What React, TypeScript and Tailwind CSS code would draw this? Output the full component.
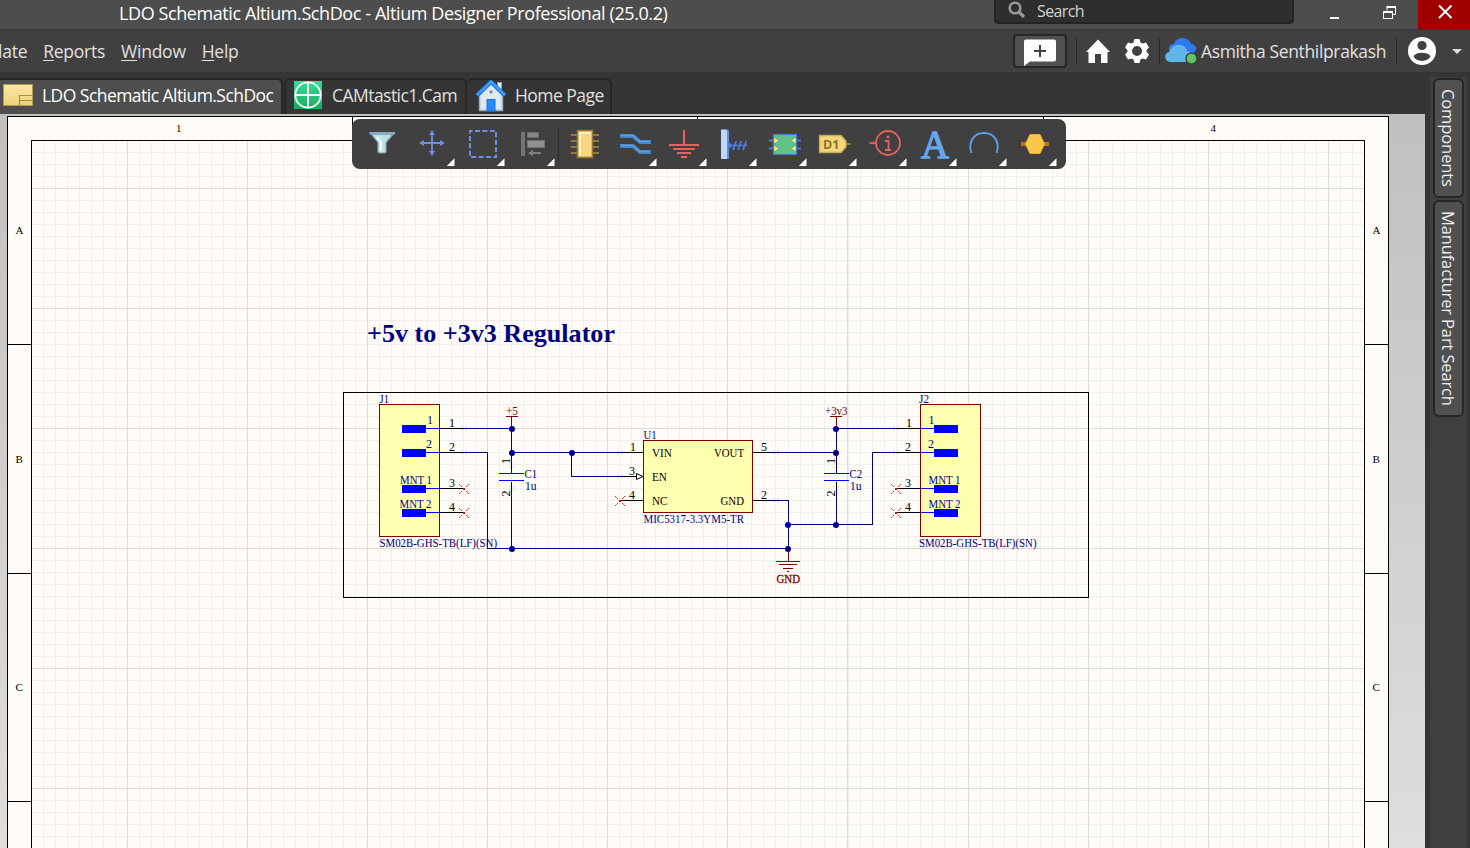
import React from "react";

const NAVY = "#000080";
const BLUE = "#0000ff";
const MAROON = "#800000";

const range = (start: number, step: number, end: number) => {
  const out: number[] = [];
  for (let i = 0; start + i * step < end; i++) out.push(Math.floor(start + i * step));
  return out;
};

type Seg = [number, number, number, number];

/** One-pixel horizontal or vertical segments between pixel coordinates. */
function Lines({ c, segs }: { c: string; segs: Seg[] }) {
  return (
    <g fill={c}>
      {segs.map(([x1, y1, x2, y2], i) => (
        <rect key={i} x={x1} y={y1} width={Math.max(1, x2 - x1)} height={Math.max(1, y2 - y1)} />
      ))}
    </g>
  );
}

function T({ x, y, s, w, c = "#000", size = 12, weight = 400 }: { x: number; y: number; s: string; w?: number; c?: string; size?: number; weight?: number }) {
  return (
    <text x={x} y={y} fill={c} fontSize={size} fontWeight={weight} textLength={w} lengthAdjust="spacingAndGlyphs">
      {s}
    </text>
  );
}

function NoConnect({ x, y }: { x: number; y: number }) {
  return (
    <g fill="#ff0000">
      <rect x={x - 1} y={y} width="2" height="2" />
      {[-5, -4, -3, 2, 3, 4].map((d) => (
        <g key={d} opacity={d === -4 || d === 3 ? 0.55 : 0.85}>
          <rect x={x + d} y={y + 1 + d} width="1" height="1" />
          <rect x={x + d} y={y - d} width="1" height="1" />
        </g>
      ))}
    </g>
  );
}

/** Faint marker around the electrical end of a pin. */
function Hotspot({ x, y }: { x: number; y: number }) {
  return (
    <g fill="#e3ebf6">
      <rect x={x - 3} y={y - 2} width="2" height="2" />
      <rect x={x + 1} y={y - 2} width="2" height="2" />
      <rect x={x - 3} y={y + 1} width="2" height="2" />
      <rect x={x + 1} y={y + 1} width="2" height="2" />
    </g>
  );
}

function Connector({ x, mirrored }: { x: number; mirrored?: boolean }) {
  const rows = [428, 452, 488, 512];
  return (
    <g>
      <rect x={x + 0.5} y="404.5" width="60" height="132" fill="#ffffb0" stroke={MAROON} />
      {rows.map((y) => (
        <g key={y}>
          <rect x={mirrored ? x + 14 : x + 23} y={y - 3} width="24" height="8" fill={BLUE} />
          <rect x={mirrored ? x + 1 : x + 47} y={y} width="13" height="1" fill={BLUE} />
          <rect x={mirrored ? x - 24 : x + 61} y={y} width="24" height="1" fill="#000" />
        </g>
      ))}
    </g>
  );
}

function Capacitor({ x, name }: { x: number; name: string }) {
  return (
    <g>
      <Lines c="#000" segs={[[x, 463, x + 1, 470], [x, 482, x + 1, 490]]} />
      <Lines c={BLUE} segs={[[x, 470, x + 1, 473], [x - 12, 473, x + 13, 474], [x - 12, 480, x + 13, 481]]} />
      <T x={x + 13.5} y={478} s={name} w={12.5} c={NAVY} size={12} />
      <T x={x + 14} y={490} s="1u" w={11.5} c={NAVY} size={12} />
      <text transform={`translate(${x - 1.5} 464) rotate(-90)`} fontSize="12">1</text>
      <text transform={`translate(${x - 1.5} 496.5) rotate(-90)`} fontSize="12">2</text>
    </g>
  );
}

function Schematic() {
  const minorX = range(43.2, 12.013, 1364);
  const minorY = range(152.2, 12.013, 848);
  const majorX = range(127.2, 120.13, 1364);
  const majorY = range(188.2, 120.13, 848);
  return (
    <svg className="block h-full w-full" viewBox="0 114 1425 734" preserveAspectRatio="xMinYMin slice" fontFamily="'Liberation Serif', 'Times New Roman', serif">
      <rect x="7.5" y="116.5" width="1381" height="760" fill="#fffcf7" stroke="#000" />
      <g fill="#eeeeea">
        {minorX.map((x) => <rect key={x} x={x} y="142" width="1" height="706" />)}
        {minorY.map((y) => <rect key={y} x="32" y={y} width="1332" height="1" />)}
      </g>
      <g fill="#dbdbd6">
        {majorX.map((x) => <rect key={x} x={x} y="142" width="1" height="706" />)}
        {majorY.map((y) => <rect key={y} x="32" y={y} width="1332" height="1" />)}
      </g>
      <rect x="31.5" y="140.5" width="1333" height="760" fill="none" stroke="#000" />
      <Lines
        c="#000"
        segs={[
          [352, 116, 353, 140], [697, 116, 698, 140], [1043, 116, 1044, 140],
          [8, 344, 31, 345], [8, 573, 31, 574], [8, 801, 31, 802],
          [1365, 344, 1388, 345], [1365, 573, 1388, 574], [1365, 801, 1388, 802],
        ]}
      />
      <T x={176} y={132} s="1" size={11} />
      <T x={1210.5} y={132} s="4" size={11} />
      {[15.5, 1372.5].map((x) => (
        <g key={x}>
          <T x={x} y={234} s="A" size={11} />
          <T x={x} y={463} s="B" size={11} />
          <T x={x} y={691} s="C" size={11} />
        </g>
      ))}

      <T x={367} y={342} s="+5v to +3v3 Regulator" w={248} c={NAVY} size={25.5} weight={700} />
      <rect x="343.5" y="392.5" width="745" height="205" fill="none" stroke="#000" />

      {[[464, 428], [464, 452], [620, 452], [620, 476], [776, 452], [776, 500], [896, 428], [896, 452], [512, 465], [512, 488], [836, 465], [836, 488]].map(([x, y]) => (
        <Hotspot key={`${x}-${y}`} x={x} y={y} />
      ))}

      <Connector x={379} />
      <Connector x={920} mirrored />
      <rect x="643.5" y="440.5" width="109" height="72" fill="#ffffb0" stroke={MAROON} />

      <Lines
        c={NAVY}
        segs={[
          [464, 428, 512, 429], [464, 452, 488, 453], [487, 452, 488, 549], [487, 548, 789, 549],
          [511, 428, 512, 463], [511, 490, 512, 549], [511, 452, 620, 453],
          [571, 452, 572, 477], [571, 476, 620, 477],
          [776, 452, 836, 453], [776, 500, 789, 501], [788, 500, 789, 549],
          [788, 524, 873, 525], [872, 452, 873, 525], [872, 452, 896, 453],
          [836, 428, 896, 429], [836, 428, 837, 463], [836, 490, 837, 525],
        ]}
      />
      <Lines
        c="#000"
        segs={[[620, 452, 643, 453], [620, 476, 637, 477], [620, 500, 643, 501], [753, 452, 776, 453], [753, 500, 776, 501]]}
      />
      <path d="M636.5 473.5 L643 476.5 L636.5 479.5 Z" fill="#fff" stroke="#000" />
      <Lines
        c={MAROON}
        segs={[
          [511, 416, 512, 428], [506, 416, 518, 417], [836, 416, 837, 428], [830, 416, 842, 417],
          [788, 550, 789, 561], [776, 561, 800, 562], [779, 564, 797, 565], [783, 568, 793, 569], [787, 571, 789, 572],
        ]}
      />
      <g fill={NAVY}>
        {[[512, 429], [512, 453], [512, 549], [572, 453], [788, 525], [788, 549], [836, 525], [836, 453], [836, 429]].map(([x, y]) => (
          <circle key={`${x}-${y}`} cx={x} cy={y} r="3" />
        ))}
      </g>
      <NoConnect x={464} y={488} />
      <NoConnect x={464} y={512} />
      <NoConnect x={620} y={500} />
      <NoConnect x={896} y={488} />
      <NoConnect x={896} y={512} />
      <Capacitor x={511} name="C1" />
      <Capacitor x={836} name="C2" />

      <T x={379.5} y={403} s="J1" w={9.5} c={NAVY} />
      <T x={427} y={424} s="1" c={NAVY} />
      <T x={426} y={448} s="2" c={NAVY} />
      <T x={400} y={484} s="MNT 1" w={32} c={NAVY} />
      <T x={399.5} y={508} s="MNT 2" w={32} c={NAVY} />
      <T x={449} y={427} s="1" />
      <T x={449} y={451} s="2" />
      <T x={449} y={487} s="3" />
      <T x={449} y={511} s="4" />
      <T x={379.5} y={547} s="SM02B-GHS-TB(LF)(SN)" w={117.5} c={NAVY} size={11.5} />

      <T x={919} y={403} s="J2" w={10} c={NAVY} />
      <T x={928.5} y={424} s="1" c={NAVY} />
      <T x={928} y={448} s="2" c={NAVY} />
      <T x={928.5} y={484} s="MNT 1" w={32} c={NAVY} />
      <T x={928.5} y={508} s="MNT 2" w={32} c={NAVY} />
      <T x={906} y={427} s="1" />
      <T x={905} y={451} s="2" />
      <T x={905} y={487} s="3" />
      <T x={905} y={511} s="4" />
      <T x={919} y={547} s="SM02B-GHS-TB(LF)(SN)" w={117.5} c={NAVY} size={11.5} />

      <T x={643.5} y={439} s="U1" w={13} c={NAVY} />
      <T x={643.5} y={523} s="MIC5317-3.3YM5-TR" w={100.5} c={NAVY} size={11.5} />
      <T x={652} y={457} s="VIN" w={20} size={11.5} />
      <T x={652} y={481} s="EN" w={15} size={11.5} />
      <T x={652} y={505} s="NC" w={15.5} size={11.5} />
      <T x={714} y={457} s="VOUT" w={30} size={11.5} />
      <T x={720.5} y={505} s="GND" w={23.5} size={11.5} />
      <T x={630} y={451} s="1" />
      <T x={629} y={475} s="3" />
      <T x={629} y={499} s="4" />
      <T x={761} y={451} s="5" />
      <T x={761} y={499} s="2" />

      <T x={506} y={415} s="+5" w={12} c={MAROON} />
      <T x={825} y={415} s="+3v3" w={22.5} c={MAROON} />
      <g stroke={MAROON} strokeWidth=".3">
        <T x={776.5} y={583} s="GND" w={23.5} c={MAROON} size={11.5} />
      </g>
    </svg>
  );
}

function Tool({ x, menu = true, children }: { x: number; menu?: boolean; children: React.ReactNode }) {
  return (
    <button className="h-[49px] w-[50px] shrink-0">
      <svg className="block h-[49px] w-[50px]" viewBox={`${x} 119 50 49`}>
        {children}
        {menu && <path d={`M${x + 46.5} 158.3 V166 H${x + 38.8} Z`} fill="#fff" />}
      </svg>
    </button>
  );
}

function Toolbar() {
  return (
    <div className="absolute left-[352px] top-[5px] flex h-[50px] w-[714px] items-start rounded-lg bg-[#404040] pl-[6px]">
      <Tool x={358} menu={false}>
        <path d="M370 132.5 H394.5 L386 142.5 V152 L384.500 153 H379.5 L378 152 V142.500 Z" fill="#bfe0e6" stroke="#7fa5ba" strokeWidth="1.2" />
        <path d="M369.500 132 H395 V134 L393 135 H371.500 L369.500 134 Z" fill="#86adc2" />
        <path d="M375 137 H378 L382 141.500 V151 H379.500 V142 Z" fill="#f2fafb" />
      </Tool>
      <Tool x={408}>
        <g stroke="#6f8fe0" strokeWidth="1.8" fill="none">
          <path d="M432 133 V154 M421.500 143 H443" />
        </g>
        <path d="M432 130 l3 5h-6z M432 156 l3-5h-6z M419 143 l5-3v6z M445 143 l-5-3v6z" fill="#6f8fe0" />
      </Tool>
      <Tool x={458}>
        <rect x="470" y="131" width="26" height="26" fill="none" stroke="#6f8fe0" strokeWidth="2" strokeDasharray="5 2.43" strokeDashoffset="2.5" />
      </Tool>
      <Tool x={508}>
        <rect x="521" y="132" width="4" height="24" fill="#747474" />
        <rect x="527.500" y="132.500" width="11" height="5" fill="#858585" stroke="#6a6a6a" />
        <rect x="527.500" y="140.500" width="17" height="7" fill="#909090" stroke="#707070" />
        <path d="M541 153 H531" stroke="#808080" strokeWidth="2" />
        <path d="M528 153 l5-3v6z" fill="#808080" />
      </Tool>
      <div className="mr-px mt-[9px] h-8 w-px shrink-0 bg-[#262626]" />
      <Tool x={560} menu={false}>
        <path d="M571 135 H599 M571 141 H599 M571 147 H599 M571 153 H599" stroke="#94783a" strokeWidth="2" />
        <rect x="577.500" y="130.500" width="15" height="27" fill="#f8d67f" stroke="#94783a" strokeWidth="1.600" />
        <path d="M579 132 H591 V134 H581 V156 H579 Z" fill="#fff0c4" />
      </Tool>
      <Tool x={610}>
        <g fill="none" stroke="#4583c4" strokeWidth="3.800">
          <path d="M620 136 H633 L640 142 H651" />
          <path d="M620 146 H633 L640 152 H651" />
        </g>
        <path d="M621 135.500 H633 L640 141.500 H649 M621 145.500 H633 L640 151.500 H649" fill="none" stroke="#5c9fe2" strokeWidth="1.500" />
      </Tool>
      <Tool x={660}>
        <path d="M684 130 V144 M669 145 H699 M673 149 H695 M677 153 H691 M681 157 H687" stroke="#e8615a" strokeWidth="2" />
      </Tool>
      <Tool x={710}>
        <path d="M721 129.500 H727 L729 131 V159 H721 Z" fill="#bdd6fb" />
        <path d="M728 130 V159 M728 142 l3.500 3.500 l-3.500 3.500z M728 145.500 H737" stroke="#5078d6" strokeWidth="1.600" fill="#8bb2f5" />
        <path d="M733 150 l3.300-9 M738 150 l3.300-9 M743 150 l3.300-9" stroke="#5078d6" strokeWidth="1.900" />
        <path d="M733 145.500 H747.500" stroke="#5078d6" strokeWidth="1.500" />
      </Tool>
      <Tool x={760}>
        <path d="M769 140.500 H801 M769 148.500 H801" stroke="#4a78d8" strokeWidth="2" />
        <rect x="773.500" y="134.500" width="23" height="20" fill="#5fc486" stroke="#477ccb" strokeWidth="1.200" />
        <path d="M774 137 l5 3.500 l-5 3.500z M774 145 l5 3.500 l-5 3.500z M796 137 l-5 3.500 l5 3.500z M796 145 l-5 3.500 l5 3.500z" fill="#fff85c" stroke="#477ccb" strokeWidth=".600" />
      </Tool>
      <Tool x={810}>
        <path d="M843 144 H851" stroke="#94783a" strokeWidth="2" />
        <path d="M819.500 135.500 H841 L846 141 V147 L841 152.500 H819.500 Z" fill="#f2d77b" stroke="#caa956" strokeWidth="1.300" />
        <text x="823" y="148.500" fontFamily="'Open Sans', sans-serif" fontSize="12.500" fontWeight="700" fill="#94702a" textLength="16.500">D1</text>
      </Tool>
      <Tool x={860}>
        <circle cx="888" cy="143" r="12" fill="none" stroke="#e8615f" strokeWidth="1.800" />
        <path d="M869.500 143 H876" stroke="#e8615f" strokeWidth="2.200" />
        <path d="M885 141 H888.500 V149.500 M885 150 H891" stroke="#e8615f" strokeWidth="1.800" fill="none" />
        <circle cx="888" cy="137" r="1.500" fill="#e8615f" />
      </Tool>
      <Tool x={910}>
        <text x="921" y="157.500" fontFamily="'Liberation Serif', serif" fontSize="40" fill="#65a6ed" stroke="#65a6ed" strokeWidth="1.300" textLength="28" lengthAdjust="spacingAndGlyphs">A</text>
      </Tool>
      <Tool x={960}>
        <path d="M971.500 153 C967.500 142 974 133 984 133 C994 133 1000.500 142 996.500 153" fill="none" stroke="#5c9de8" strokeWidth="1.900" />
      </Tool>
      <Tool x={1010}>
        <rect x="1021" y="142" width="28" height="4" fill="#b87524" />
        <path d="M1030 134.500 H1040 L1044.500 144 L1040 153.500 H1030 L1025.500 144 Z" fill="#fbc748" stroke="#eeb233" strokeWidth="1" />
      </Tool>
    </div>
  );
}

function SchIcon() {
  return (
    <svg className="h-[22px] w-[30px] shrink-0" viewBox="0 0 30 22">
      <defs>
        <linearGradient id="sch" x1="0" y1="0" x2="0" y2="1">
          <stop offset="0" stopColor="#fae8a8" />
          <stop offset="1" stopColor="#ecd377" />
        </linearGradient>
      </defs>
      <rect x=".5" y=".5" width="29" height="21" fill="url(#sch)" stroke="#b39a55" />
      <path d="M29 11.500 H16.500 V21 M16.500 16.500 H29" fill="none" stroke="#a88f4a" strokeWidth="1.200" />
    </svg>
  );
}

function CamIcon() {
  return (
    <svg className="h-7 w-7 shrink-0" viewBox="0 0 28 28">
      <defs>
        <linearGradient id="cam" x1="0" y1="0" x2="0" y2="1">
          <stop offset="0" stopColor="#3fd995" />
          <stop offset="1" stopColor="#14b060" />
        </linearGradient>
      </defs>
      <rect width="28" height="28" fill="url(#cam)" />
      <circle cx="14" cy="14" r="12.700" fill="none" stroke="#fff" strokeWidth="1.800" />
      <path d="M14 1 V27 M1 14 H27" stroke="#fff" strokeWidth="2" />
    </svg>
  );
}

function HomePageIcon() {
  return (
    <svg className="mt-0.5 h-8 w-8 shrink-0" viewBox="0 0 32 32">
      <rect x="22.500" y="2.500" width="4" height="9" fill="#e4ecf5" stroke="#8ba9b9" />
      <path d="M4.500 14 L16 3 L27.500 14 V30.500 H4.500 Z" fill="#dfe8f3" stroke="#8fb0bf" strokeWidth="1.500" />
      <rect x="12" y="19.500" width="8" height="11.500" fill="#2a8cf3" stroke="#1c6dde" />
      <circle cx="16" cy="12" r="1.800" fill="#7895a5" />
      <path d="M2 15.500 L16 2 L30 15.500" fill="none" stroke="#1c6dde" strokeWidth="4.200" />
      <path d="M2 15 L16 1.700 L30 15" fill="none" stroke="#399df9" strokeWidth="2.600" />
    </svg>
  );
}

export default function App() {
  return (
    <div className="flex h-[848px] w-[1470px] flex-col overflow-hidden bg-[#353535] font-['Open_Sans',sans-serif] text-[18px] text-[#e0e0e0]">
      <header className="flex h-[30px] shrink-0 border-b border-[#353535] bg-[#4d4d4d]">
        <h1 className="w-[994px] shrink-0 whitespace-pre pl-[119px] leading-[27px] tracking-[-0.41px] text-white">LDO Schematic Altium.SchDoc - Altium Designer Professional (25.0.2)</h1>
        <div className="flex h-6 w-[300px] shrink-0 items-start rounded-b border-2 border-t-0 border-[#242424] bg-[#2e2e2e] pl-3">
          <svg className="mt-px h-[18px] w-[18px]" viewBox="0 0 18 18" fill="none" stroke="#989898">
            <circle cx="7" cy="7" r="5.300" strokeWidth="2.600" />
            <path d="M11 11 L16 16" strokeWidth="3.200" />
          </svg>
          <span className="ml-[11px] text-[16px] leading-[22px] tracking-[-0.6px] text-[#d4d4d4]">Search</span>
        </div>
        <div className="flex flex-1 justify-end">
          <svg className="h-[29px] w-[52px]" viewBox="1314 0 52 29"><rect x="1330" y="17" width="9" height="2" fill="#fff" /></svg>
          <svg className="h-[29px] w-[52px]" viewBox="1366 0 52 29" fill="none" stroke="#fff">
            <path d="M1387 10.500 V7.500 H1395.500 V14.500 H1393" strokeWidth="1" />
            <path d="M1386.500 7 H1396" strokeWidth="2" />
            <rect x="1383.500" y="11.500" width="9" height="7" />
            <path d="M1383 12 H1393" strokeWidth="2" />
          </svg>
          <button className="flex h-[29px] w-[52px] bg-[#a10000]">
            <svg className="h-[29px] w-[52px]" viewBox="1418 0 52 29"><path d="M1439 5.500 L1451.500 18 M1451.500 5.500 L1439 18" stroke="#fff" strokeWidth="2" /></svg>
          </button>
        </div>
      </header>

      <nav className="flex h-[42px] shrink-0 items-center bg-[#404040]">
        <div className="-ml-0.5 flex w-[1015px] shrink-0 gap-4 text-[17.5px] leading-[43px] tracking-[-0.25px]">
          <span>late</span>
          <span><span className="underline underline-offset-2 decoration-1">R</span>eports</span>
          <span><span className="underline underline-offset-2 decoration-1">W</span>indow</span>
          <span><span className="underline underline-offset-2 decoration-1">H</span>elp</span>
        </div>
        <button className="flex h-[34px] w-[54px] shrink-0 items-center justify-center rounded border-2 border-[#262626] bg-[#505050]">
          <svg className="mt-px h-[28px] w-8 shrink-0" viewBox="1024 38 32 28">
            <path d="M1026 39.500 H1054 Q1056 39.500 1056 41.500 V59.500 Q1056 61.500 1054 61.500 H1030 L1024 66 V41.500 Q1024 39.500 1026 39.500 Z" fill="#fff" />
            <path d="M1040 45 V57 M1034 51 H1046" stroke="#444" strokeWidth="2" />
          </svg>
        </button>
        <div className="ml-[9px] h-[26px] w-px bg-[#292929]" />
        <svg className="h-[42px] w-[82px] shrink-0" viewBox="1077 30 82 42">
          <path d="M1098 39.500 L1110 52 H1107.500 V63 H1101 V54 H1095 V63 H1088.500 V52 H1086 Z" fill="#fff" />
          <path fillRule="evenodd" fill="#fff" d="M1134.500 39 H1139.500 L1140.500 42.500 L1142.500 43.600 L1146 42.600 L1149 47.500 L1146.600 50 V52 L1149 54.500 L1146 59.400 L1142.500 58.400 L1140.500 59.500 L1139.500 63 H1134.500 L1133.500 59.500 L1131.500 58.400 L1128 59.400 L1125 54.500 L1127.400 52 V50 L1125 47.500 L1128 42.600 L1131.500 43.600 L1133.500 42.500 Z M1137 46 A5 5 0 1 0 1137 56 A5 5 0 1 0 1137 46 Z" />
        </svg>
        <div className="h-[26px] w-px bg-[#292929]" />
        <svg className="ml-[5px] h-[26px] w-8 shrink-0" viewBox="1165 39 32 26">
          <path d="M1169 54 V49 C1169 46 1171.500 44.500 1174 45 C1175 37.500 1189 36.500 1191 45 C1195 45 1197 49 1196 51 L1194 54 Z" fill="#2d79ef" />
          <path d="M1171 63 C1164 63 1163 54 1169.500 53 C1170.500 44 1185 43 1187 52 C1189 52 1191 54 1191 57 L1188 63 Z" fill="#61b5e9" />
          <circle cx="1191.500" cy="59.500" r="6.200" fill="#404040" />
          <circle cx="1191.500" cy="59.500" r="4.800" fill="#63c464" />
        </svg>
        <span className="ml-1 w-[195px] shrink-0 whitespace-nowrap text-[17.5px] leading-[43px] tracking-[-0.35px]">Asmitha Senthilprakash</span>
        <div className="h-[26px] w-px bg-[#292929]" />
        <svg className="ml-[11px] h-7 w-7 shrink-0" viewBox="0 0 28 28">
          <circle cx="14" cy="14" r="14" fill="#fff" />
          <circle cx="14" cy="8.500" r="4.600" fill="#404040" />
          <path d="M5.500 19 C8 14.500 20 14.500 22.500 19 C20 25.500 8 25.500 5.500 19 Z" fill="#404040" />
        </svg>
        <svg className="ml-4 h-[5px] w-[10px]" viewBox="0 0 10 5"><path d="M0 0 H10 L5 5 Z" fill="#ddd" /></svg>
      </nav>

      <div className="flex min-h-0 flex-1">
        <main className="flex w-[1425px] shrink-0 flex-col">
          <div className="flex h-[42px] shrink-0 items-end text-[17.5px] tracking-[-0.54px]">
            <div className="flex h-9 w-[283px] items-center rounded-tr-md border-r-2 border-t-2 border-[#252525] bg-[#4e4e4e] pb-1 pl-[3px] text-white">
              <SchIcon />
              <span className="ml-[9px] whitespace-nowrap">LDO Schematic Altium.SchDoc</span>
            </div>
            <div className="ml-px flex h-9 w-[183px] items-center rounded-t-md border-x-2 border-t-2 border-[#252525] bg-[#353535] pb-1 pl-2">
              <CamIcon />
              <span className="ml-[10px]">CAMtastic1.Cam</span>
            </div>
            <div className="flex h-9 w-[145px] items-center rounded-t-md border-r-2 border-t-2 border-[#252525] bg-[#353535] pb-1 pl-2">
              <HomePageIcon />
              <span className="ml-2 whitespace-nowrap">Home Page</span>
            </div>
          </div>
          <section className="relative min-h-0 flex-1 bg-linear-to-b from-[#c0c0c0] to-[#dedede]">
            <Schematic />
            <Toolbar />
          </section>
        </main>
        <aside className="flex flex-1 pb-0 pl-[5px] pr-[3px] pt-[5px]">
          <div className="flex flex-1 flex-col items-center gap-0.5 bg-[#3f3f3f] text-[16.5px] text-[#eeeeee]">
            <button className="mt-px flex h-[120px] w-[31px] items-center justify-center rounded-md border-2 border-[#262626] bg-[#505050] pr-0.5 [writing-mode:vertical-rl]">
              <span className="tracking-[-0.1px]">Components</span>
            </button>
            <button className="flex h-[217px] w-[31px] items-center justify-center rounded-md border-2 border-[#262626] bg-[#505050] pr-0.5 [writing-mode:vertical-rl]">
              <span className="whitespace-nowrap tracking-[-0.14px]">Manufacturer Part Search</span>
            </button>
          </div>
        </aside>
      </div>
    </div>
  );
}
